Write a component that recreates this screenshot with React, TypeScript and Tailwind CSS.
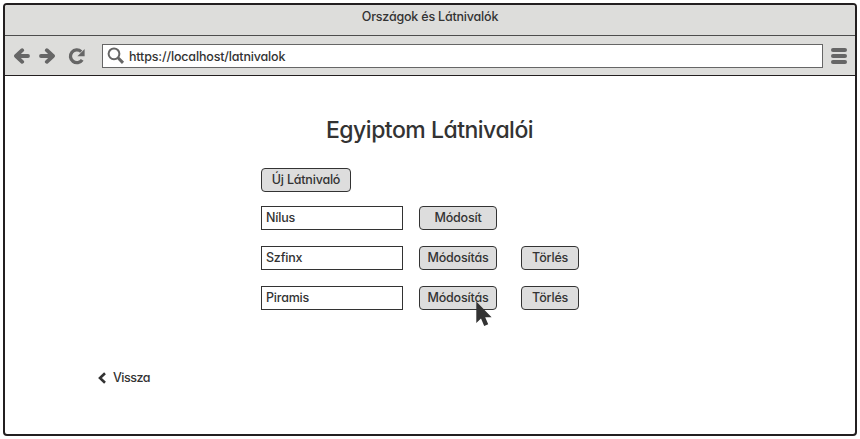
import React from 'react';

const label =
  "whitespace-nowrap font-['Inter','Liberation_Sans',sans-serif] font-medium [font-feature-settings:'cv11'] text-[#333333]";

const small = 'text-[12.5px] leading-4 tracking-[-0.2px]';

function Button({ text, width }: { text: string; width: string }) {
  return (
    <button
      className={`${label} ${small} ${width} flex h-6 shrink-0 items-center justify-center rounded-[4px] border border-[#333333] bg-[#dddddd] pb-px`}
    >
      {text}
    </button>
  );
}

function Field({ text }: { text: string }) {
  return (
    <div className="mr-4 flex h-6 w-[142px] shrink-0 items-center border border-[#333333] bg-white pb-px pl-[4px]">
      <span className={`${label} ${small}`}>{text}</span>
    </div>
  );
}

function Cursor() {
  return (
    <svg className="absolute left-[57px] top-[15px] h-[27px] w-[18px]" viewBox="0 0 18 27" fill="#333333">
      <path d="M0.3 0.6V22L5 17.6L8.2 24.9L12.2 23.2L9.2 16.2H15.6Z" />
    </svg>
  );
}

export default function App() {
  return (
    <div className="h-[439px] w-[860px] bg-white pl-[3px] pt-[3px]">
      <div className="flex h-[433px] w-[854px] flex-col overflow-hidden rounded-[4px] border-2 border-[#231f20] bg-white">
        <header className="flex h-[31px] shrink-0 justify-center border-b border-[#4d4d4d] bg-[#dddddb] pt-1">
          <span className={`${label} ${small}`}>Országok és Látnivalók</span>
        </header>
        <nav className="flex h-10 shrink-0 items-center border-b border-[#231f20] bg-[#dddddb] pl-[9px]">
          <svg className="h-4 w-4" viewBox="0 0 16 16" fill="none" stroke="#666666" strokeWidth="3.8" strokeLinecap="round" strokeLinejoin="round">
            <path d="M8.2 2.2L2 8L8.2 13.8M2.5 8H14" />
          </svg>
          <svg className="ml-[9px] h-4 w-4" viewBox="0 0 16 16" fill="none" stroke="#666666" strokeWidth="3.8" strokeLinecap="round" strokeLinejoin="round">
            <path d="M7.8 2.2L14 8L7.8 13.8M13.5 8H2" />
          </svg>
          <svg className="ml-[13px] h-[18px] w-[18px]" viewBox="0 0 18 18">
            <path d="M14.2 12.8A6.4 6.4 0 1 1 13.2 4.6" fill="none" stroke="#666666" strokeWidth="3.3" />
            <path d="M16.6 2V9.2H9.4Z" fill="#666666" />
          </svg>
          <div className="ml-[16px] flex h-6 w-[721px] items-center border border-[#666666] bg-white pl-1">
            <svg className="h-[18px] w-[18px]" viewBox="0 0 18 18" fill="none" stroke="#666666">
              <circle cx="7" cy="6.8" r="5.4" strokeWidth="2" />
              <path d="M11 10.8L16 15.9" strokeWidth="3" />
            </svg>
            <span className={`${label} ml-1 mt-[2px] text-[12.5px] leading-4 tracking-[-0.16px]`}>https://localhost/latnivalok</span>
          </div>
          <svg className="ml-2 h-[18px] w-4" viewBox="0 0 16 18" fill="#666666">
            <rect y="1" width="16" height="4" rx="2" />
            <rect y="7" width="16" height="4" rx="2" />
            <rect y="13" width="16" height="4" rx="2" />
          </svg>
        </nav>
        <main className="flex flex-col pl-[256px] pt-[38px]">
          <h1 className={`${label} ml-[65px] text-[23px] leading-8 tracking-[-0.5px]`}>Egyiptom Látnivalói</h1>
          <div className="mt-[22px] flex">
            <Button text="Új Látnivaló" width="w-[90px]" />
          </div>
          <div className="mt-[14px] flex flex-col gap-4">
            <div className="flex">
              <Field text="Nílus" />
              <Button text="Módosít" width="w-[78px]" />
            </div>
            <div className="flex">
              <Field text="Szfinx" />
              <Button text="Módosítás" width="w-[78px]" />
              <div className="ml-6">
                <Button text="Törlés" width="w-[58px]" />
              </div>
            </div>
            <div className="flex">
              <Field text="Piramis" />
              <div className="relative">
                <Button text="Módosítás" width="w-[78px]" />
                <Cursor />
              </div>
              <div className="ml-6">
                <Button text="Törlés" width="w-[58px]" />
              </div>
            </div>
          </div>
          <a className="-ml-[164px] mt-[60px] flex items-center">
            <svg className="h-3 w-[10px]" viewBox="0 0 10 12" fill="none" stroke="#333333" strokeWidth="2.6">
              <path d="M8 1.3L3 6L8 10.7" />
            </svg>
            <span className={`${label} ml-[6px] text-[12.5px] leading-4 tracking-[-0.5px]`}>Vissza</span>
          </a>
        </main>
      </div>
    </div>
  );
}
